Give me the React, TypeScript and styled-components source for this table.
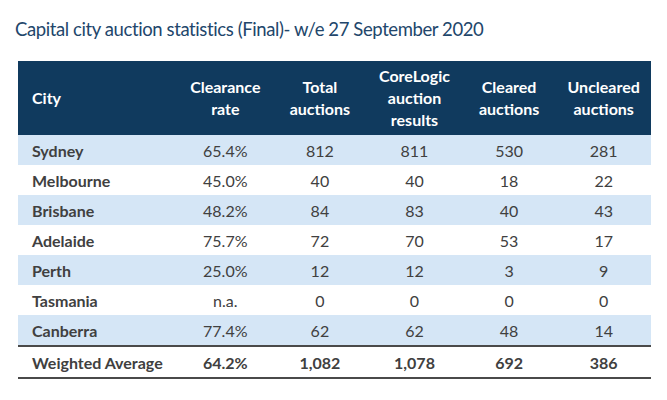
import styled, { createGlobalStyle } from "styled-components";

const Global = createGlobalStyle`
  body {
    margin: 0;
    background: #fff;
    font-family: "Lato", "Liberation Sans", sans-serif;
  }
`;

const Page = styled.div`
  width: 667px;
  height: 400px;
  padding: 17px 16px 0 18px;
  box-sizing: border-box;
`;

const Title = styled.h1`
  margin: 0 0 0 -3px;
  font-size: 18.5px;
  font-weight: 400;
  color: #22466b;
  line-height: 24px;
  letter-spacing: -0.4px;
`;

const Table = styled.table`
  margin-top: 20px;
  width: 633px;
  border-collapse: collapse;
  table-layout: fixed;
  font-size: 16px;
  color: #404040;
`;

const Head = styled.thead`
  background: #103a5e;
  color: #fff;
`;

const Th = styled.th<{ $left?: boolean }>`
  height: 74px;
  padding: 0 ${(p) => (p.$left ? "14px" : "2px")};
  font-weight: 700;
  line-height: 22px;
  text-align: ${(p) => (p.$left ? "left" : "center")};
  vertical-align: middle;
`;

const Row = styled.tr<{ $shade?: boolean }>`
  background: ${(p) => (p.$shade ? "#d5e6f6" : "#fff")};
`;

const Td = styled.td<{ $left?: boolean; $bold?: boolean }>`
  height: 30px;
  padding: 0 ${(p) => (p.$left ? "14px" : "2px")};
  text-align: ${(p) => (p.$left ? "left" : "center")};
  font-weight: ${(p) => (p.$bold ? 700 : 400)};
`;

const TotalRow = styled.tr`
  border-top: 2px solid #4a4a4a;
  border-bottom: 2px solid #4a4a4a;
`;

const rows = [
  ["Sydney", "65.4%", "812", "811", "530", "281"],
  ["Melbourne", "45.0%", "40", "40", "18", "22"],
  ["Brisbane", "48.2%", "84", "83", "40", "43"],
  ["Adelaide", "75.7%", "72", "70", "53", "17"],
  ["Perth", "25.0%", "12", "12", "3", "9"],
  ["Tasmania", "n.a.", "0", "0", "0", "0"],
  ["Canberra", "77.4%", "62", "62", "48", "14"],
];

const total = ["Weighted Average", "64.2%", "1,082", "1,078", "692", "386"];

export default function App() {
  return (
    <>
      <Global />
      <Page>
        <Title>Capital city auction statistics (Final)- w/e 27 September 2020</Title>
        <Table>
          <colgroup>
            <col style={{ width: 160 }} />
            <col />
            <col />
            <col />
            <col />
            <col />
          </colgroup>
          <Head>
            <tr>
              <Th $left>City</Th>
              <Th>Clearance<br />rate</Th>
              <Th>Total<br />auctions</Th>
              <Th>CoreLogic<br />auction<br />results</Th>
              <Th>Cleared<br />auctions</Th>
              <Th>Uncleared<br />auctions</Th>
            </tr>
          </Head>
          <tbody>
            {rows.map((r, i) => (
              <Row key={r[0]} $shade={i % 2 === 0}>
                {r.map((c, j) => (
                  <Td key={j} $left={j === 0} $bold={j === 0}>
                    {c}
                  </Td>
                ))}
              </Row>
            ))}
            <TotalRow>
              {total.map((c, j) => (
                <Td key={j} $left={j === 0} $bold>
                  {c}
                </Td>
              ))}
            </TotalRow>
          </tbody>
        </Table>
      </Page>
    </>
  );
}
